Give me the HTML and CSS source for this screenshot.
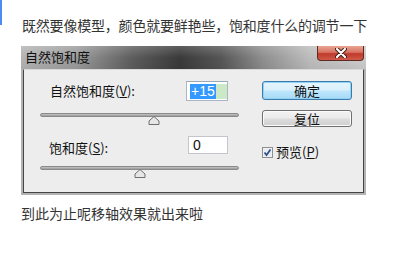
FILE: index.html
```html
<!DOCTYPE html>
<html lang="zh-CN">
<head>
<meta charset="utf-8">
<title>自然饱和度</title>
<link rel="stylesheet" href="styles.css">
</head>
<body>
<div class="page">
  <div class="top">
    <div class="accent"></div>
    <p class="lead">既然要像模型，颜色就要鲜艳些，饱和度什么的调节一下</p>
  </div>

  <div class="dialog">
    <div class="titlebar">
      <span class="title">自然饱和度</span>
      <div class="close">
        <svg width="12" height="10" viewBox="0 0 12 10">
          <path d="M2 1 L10 9 M10 1 L2 9" stroke="#3a1a14" stroke-width="4" stroke-linecap="round"/>
          <path d="M2 1 L10 9 M10 1 L2 9" stroke="#ffffff" stroke-width="2.2" stroke-linecap="round"/>
        </svg>
      </div>
    </div>
    <div class="body">
      <div class="left">
        <div class="row row1">
          <span class="label">自然饱和度(<u>V</u>):</span>
          <div class="field f1"><span class="sel">+15</span><span class="rest"></span></div>
        </div>
        <div class="slider s1">
          <div class="track"></div>
          <div class="thumbs">
            <svg class="thumb" style="left:57.5%" width="12" height="9" viewBox="0 0 12 9">
              <path d="M6 0.5 L11 5 L11 8.5 L1 8.5 L1 5 Z" fill="#e6e6e6" stroke="#6f6f6f" stroke-width="1" stroke-linejoin="round"/>
            </svg>
          </div>
        </div>
        <div class="row row2">
          <span class="label l2">饱和度(<u>S</u>):</span>
          <div class="field f2">0</div>
        </div>
        <div class="slider s2">
          <div class="track"></div>
          <div class="thumbs">
            <svg class="thumb" style="left:50%" width="12" height="9" viewBox="0 0 12 9">
              <path d="M6 0.5 L11 5 L11 8.5 L1 8.5 L1 5 Z" fill="#e6e6e6" stroke="#6f6f6f" stroke-width="1" stroke-linejoin="round"/>
            </svg>
          </div>
        </div>
      </div>
      <div class="right">
        <div class="btn btn-ok">确定</div>
        <div class="btn btn-reset">复位</div>
        <div class="check">
          <svg width="11" height="11" viewBox="0 0 11 11">
            <rect x="0.5" y="0.5" width="10" height="10" fill="#f6f6f6" stroke="#8e8f8f"/>
            <rect x="1.5" y="1.5" width="8" height="8" fill="#e9ecf0"/>
            <path d="M2.5 5.5 L4.5 8 L8.5 2.5" fill="none" stroke="#2c4e87" stroke-width="1.7"/>
          </svg>
          <span class="check-label">预览(<u>P</u>)</span>
        </div>
      </div>
    </div>
  </div>

  <p class="after">到此为止呢移轴效果就出来啦</p>
</div>
</body>
</html>
```

FILE: styles.css
```css
html, body {
  margin: 0;
  padding: 0;
  background: #ffffff;
}

.page {
  width: 420px;
  height: 278px;
  overflow: hidden;
  font-family: "Noto Sans CJK SC", "Noto Sans", sans-serif;
}

.top {
  display: flex;
  align-items: flex-start;
}

.accent {
  width: 2px;
  height: 25px;
  background: #4b8ef0;
  flex: none;
}

.lead {
  margin: 0 0 0 20px;
  padding-top: 15px;
  font-size: 14px;
  line-height: 20px;
  letter-spacing: -0.2px;
  color: #333333;
  white-space: nowrap;
}

.dialog {
  margin: 11px 0 0 21px;
  width: 345px;
  background: #b3b3b3;
  padding-bottom: 2px;
  box-sizing: border-box;
}

.titlebar {
  height: 23px;
  display: flex;
  justify-content: space-between;
  align-items: flex-start;
  background:
    linear-gradient(to bottom, rgba(255,255,255,0.18), rgba(255,255,255,0) 50%, rgba(0,0,0,0.05)),
    linear-gradient(to right, #b4b4b4 0%, #9c9c9c 16%, #5e5e5e 32%, #3a3a3a 46%, #565656 58%, #8e8e8e 70%, #bdbdbd 84%, #cdcdcd 100%);
}

.title {
  padding-left: 4px;
  font-size: 13px;
  line-height: 22px;
  color: #111111;
}

.close {
  width: 45px;
  height: 14px;
  margin-right: 2px;
  border: 1px solid #5e2a22;
  border-top: none;
  border-radius: 0 0 4px 4px;
  background: linear-gradient(to bottom, #e9a593 0%, #d77362 45%, #c0392a 55%, #cf5a48 100%);
  display: flex;
  align-items: center;
  justify-content: center;
}

.body {
  margin: 0 2px;
  height: 124px;
  box-sizing: border-box;
  border: 1px solid #454545;
  border-top-color: #dadada;
  background: #ededed;
  display: flex;
}

.left {
  width: 199px;
  margin-left: 16px;
  display: flex;
  flex-direction: column;
}

.row {
  display: flex;
  align-items: center;
  font-size: 13px;
  color: #111111;
}

.row1 {
  margin-top: 11px;
  height: 20px;
}

.row2 {
  margin-top: 11px;
  height: 18px;
}

.label {
  padding-left: 10px;
  line-height: 18px;
  white-space: nowrap;
}

.l2 {
  padding-left: 9px;
  position: relative;
  top: 3px;
}

.field {
  margin-left: auto;
  margin-right: 11px;
  box-sizing: border-box;
  background: #ffffff;
  border: 1px solid #abb6c4;
  border-top-color: #9aa8b8;
  font-family: "Liberation Sans", Arial, sans-serif;
  font-size: 14px;
  display: flex;
  align-items: center;
}

.f1 {
  width: 42px;
  height: 20px;
  padding-left: 3px;
}

.f2 {
  width: 40px;
  height: 18px;
  padding-left: 4px;
  color: #111111;
  border-color: #c3c6cb;
}

.sel {
  background: #3399ff;
  color: #ffffff;
  height: 15px;
  line-height: 15px;
  padding: 0 1px;
}

.rest {
  width: 11px;
  height: 15px;
  background: #cbe9c6;
}

.slider {
  margin-top: 12px;
}

.track {
  height: 4px;
  box-sizing: border-box;
  border: 1px solid #8a8a8a;
  border-radius: 3px;
  background: linear-gradient(to bottom, #c4c4c4, #9a9a9a);
}

.thumbs {
  position: relative;
  height: 8px;
}

.thumb {
  position: absolute;
  top: -1px;
  transform: translateX(-50%);
}

.right {
  width: 90px;
  margin-left: 23px;
  display: flex;
  flex-direction: column;
}

.btn {
  box-sizing: border-box;
  width: 90px;
  border-radius: 3px;
  font-size: 13px;
  color: #111111;
  text-align: center;
}

.btn-ok {
  margin-top: 11px;
  height: 19px;
  line-height: 17px;
  border: 1px solid #3d7bad;
  box-shadow: inset 0 0 0 1px #8fd3f5;
  background: linear-gradient(to bottom, #e6f5fc 0%, #d9f0fc 48%, #bee6fd 52%, #a7d9f5 100%);
}

.btn-reset {
  margin-top: 10px;
  height: 17px;
  line-height: 15px;
  border: 1px solid #707070;
  box-shadow: inset 0 0 0 1px #fbfbfb;
  background: linear-gradient(to bottom, #f2f2f2 0%, #ebebeb 48%, #dddddd 52%, #cfcfcf 100%);
}

.check {
  margin-top: 18px;
  display: flex;
  align-items: center;
  gap: 3px;
  font-size: 13px;
  color: #111111;
}

.check-label {
  line-height: 14px;
  white-space: nowrap;
}

.after {
  margin: 8px 0 0 21px;
  font-size: 14px;
  line-height: 20px;
  color: #333333;
}
```
